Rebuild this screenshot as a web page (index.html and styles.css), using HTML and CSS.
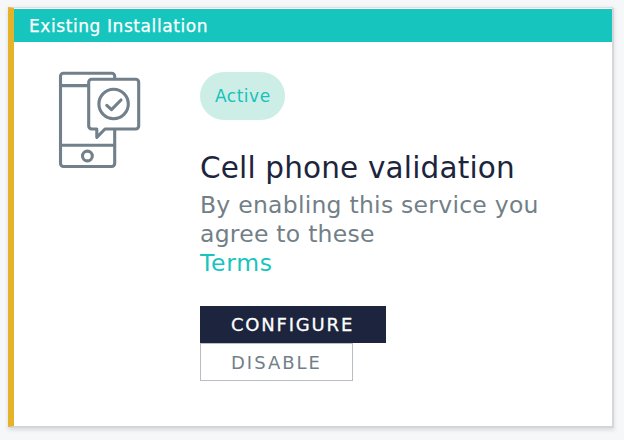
FILE: index.html
```html
<!DOCTYPE html>
<html lang="en">
<head>
<meta charset="utf-8">
<title>Existing Installation</title>
<link rel="stylesheet" href="styles.css">
</head>
<body>
<article class="card">
  <header class="card-header">Existing Installation</header>
  <div class="card-body">
    <svg class="phone" width="84" height="100" viewBox="0 0 84 100" fill="none" stroke="#71808a" stroke-width="3.100" stroke-linejoin="round">
      <path d="M57.700 9V6.300a3 3 0 0 0-3-3H6.500a3 3 0 0 0-3 3V93.500a3 3 0 0 0 3 3H54.700a3 3 0 0 0 3-3V59M3.500 15.600H32M3.500 75.200H57.700"/>
      <circle cx="30.400" cy="86" r="4.900"/>
      <path d="M34.700 9.200H78.700a3 3 0 0 1 3 3V56a3 3 0 0 1-3 3H48L39.800 67.300V59H34.700a3 3 0 0 1-3-3V12.200a3 3 0 0 1 3-3Z"/>
      <circle cx="56.600" cy="34" r="14.700"/>
      <path stroke-linecap="round" d="M49.800 35.300l4.700 4.400 9.500-9.700"/>
    </svg>
    <div class="content">
      <span class="badge">Active</span>
      <h1 class="title">Cell phone validation</h1>
      <p class="description">By enabling this service you<br>agree to these</p>
      <a class="terms">Terms</a>
      <div class="actions">
        <button class="button primary">CONFIGURE</button>
        <button class="button secondary">DISABLE</button>
      </div>
    </div>
  </div>
</article>
</body>
</html>
```
FILE: styles.css
```css
* { box-sizing: border-box; }
body { margin: 0; padding: 7px 12px 13px 8px; background: #f6f7f9; font-family: "DejaVu Sans", sans-serif; }
.card { height: 420px; padding-top: 1px; background: #fff; border-left: 6px solid #e5b32a; border-top: 1px solid #dcdee1; border-bottom: 1px solid #d2d3d7; box-shadow: 1px 0 0 0 #d6d7db, 2px 1px 0 0 #d6d7db, 1px 2px 4px 1px #d8dadd; }
.card-header { height: 33px; padding-left: 15px; background: #16c6be; color: #fff; font-size: 17px; letter-spacing: .58px; line-height: 34px; -webkit-text-stroke: .25px #fff; }
.card-body { display: flex; padding: 28px 0 0 43px; }
.phone { flex: none; margin-right: 59px; }
.content { display: flex; flex-direction: column; align-items: flex-start; padding-top: 2px; }
.badge { width: 85px; height: 48px; padding-left: 15px; border-radius: 24px; background: #cdeee7; color: #16c2ba; font-size: 17px; letter-spacing: .5px; line-height: 48px; }
.title { margin: 27px 0 0; color: #1c253d; font-size: 29.5px; font-weight: 400; letter-spacing: .16px; line-height: 42px; white-space: nowrap; }
.description { margin: 2px 0 0; color: #727f87; font-size: 23.5px; letter-spacing: .25px; line-height: 29px; white-space: nowrap; }
.terms { color: #16c6be; font-size: 23.5px; letter-spacing: .7px; line-height: 29px; }
.actions { display: flex; flex-direction: column; align-items: flex-start; margin-top: 28px; }
.button { font: 18px "DejaVu Sans", sans-serif; letter-spacing: 1.8px; padding: 0 0 0 31px; border: 0; text-align: left; }
.primary { width: 186px; height: 37px; background: #1c253d; color: #fff; -webkit-text-stroke: .3px #fff; }
.secondary { width: 153px; height: 38px; padding: 1px 0 0 30px; background: #fff; border: 1px solid #b8bdc6; color: #727f87; letter-spacing: 2px; }
```
